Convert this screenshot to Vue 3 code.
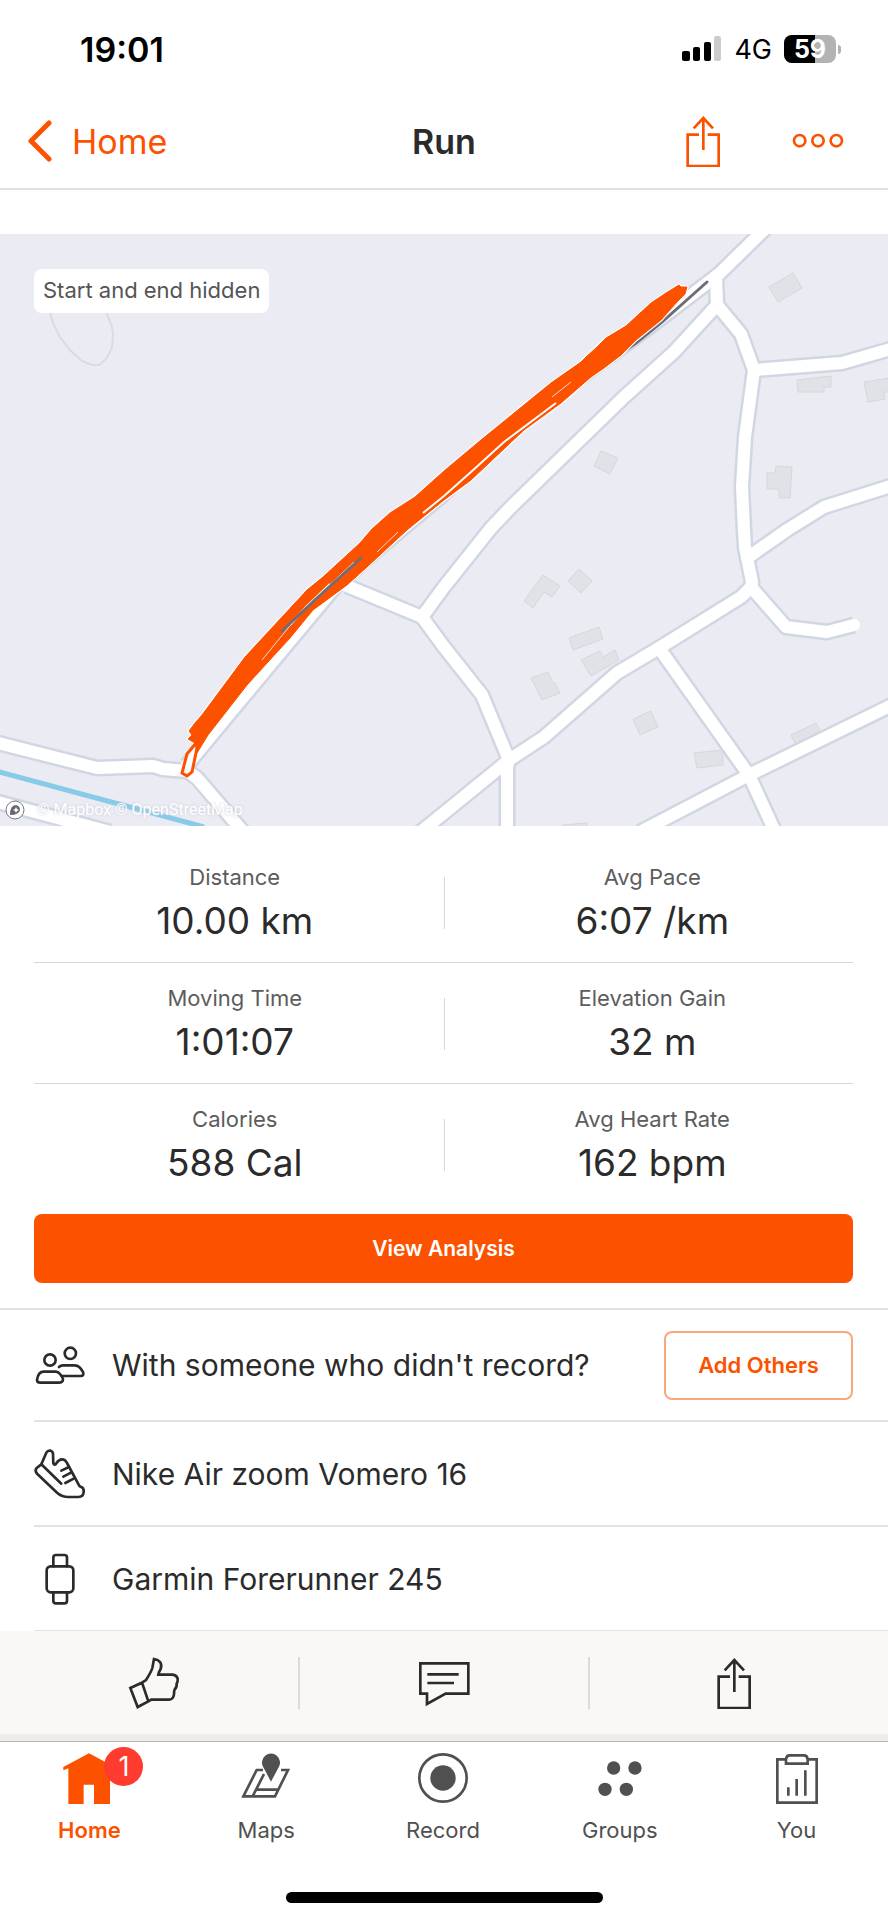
<template>
  <div class="screen">
    <!-- status bar -->
    <div class="status">
      <span class="clock">19:01</span>
      <div class="status-right">
        <svg class="signal" viewBox="0 0 40 26" aria-hidden="true">
          <rect x="0" y="15" width="8" height="10" rx="2" />
          <rect x="11" y="11" width="7" height="14" rx="2" />
          <rect x="22" y="6" width="7" height="19" rx="2" />
          <rect class="off" x="32" y="0" width="7" height="25" rx="2" />
        </svg>
        <span class="network">4G</span>
        <span class="battery">
          <span class="battery-level" :style="{ width: battery + '%' }"></span>
          <b>{{ battery }}</b>
        </span>
      </div>
    </div>

    <header class="topbar">
      <a class="back" href="#home">
        <svg viewBox="0 0 24 42" aria-hidden="true"><path d="M21 3 L3 21 L21 39" /></svg>
        Home
      </a>
      <h1>Run</h1>
      <div class="topbar-actions">
        <button type="button" aria-label="Share">
          <svg class="icon" viewBox="0 0 156 156">
            <path d="M66 59 H32 V153 H125 V59 H92 M79 8 V105 M50 40 L79 9 L108 40" />
          </svg>
        </button>
        <button type="button" aria-label="More">
          <svg class="icon" viewBox="0 0 156 156">
            <circle cx="23" cy="77" r="17" />
            <circle cx="78" cy="77" r="17" />
            <circle cx="133" cy="77" r="17" />
          </svg>
        </button>
      </div>
    </header>

    <main>
      <div class="map">
        <svg class="map-canvas" viewBox="0 0 888 592" role="img" aria-label="Run route">
          <path class="track" d="M50 78 L53 89 L60 103 L70 116 L82 127 L92 131 L99 131 L106 125 L112 114 L113 100 L112 93 L106 78" />
          <polygon v-for="b in buildings" :key="b" class="building" :points="b" />
          <path class="water" d="M-4 537 L204 593" />
          <path v-for="r in roads" :key="'c' + r" class="road-casing" :d="r" />
          <path v-for="r in roads" :key="'r' + r" class="road" :d="r" />
          <path class="rail" d="M707 48 L662 88 L636 109 L617 122" />
          <path class="route-halo" :d="route" />
          <path class="route-loop" d="M197 508 L187 520 L182 539 L187 542 L192 538 L197 514" />
          <path class="route" :d="route" />
          <path class="streak wide" d="M423 279 L444 262 L471 238 L504 208 L556 169 M290 391 L306 373 L330 350" />
          <path class="streak" d="M571 148 L552 163 M262 426 L293 388 L306 373 L354 328 M377 318 L398 298" />
          <path class="rail" d="M282 397 L317 364 L361 324" />
        </svg>
        <span class="privacy">Start and end hidden</span>
        <div class="credit">
          <svg viewBox="0 0 20 20" aria-hidden="true">
            <circle class="ring" cx="10" cy="10" r="9" />
            <path d="M5 15 Q5 5 11 5 Q15 6 15 10 Q14 15 5 15z" />
            <path class="star" d="M11 7 L12 9 L14 10 L12 11 L11 13 L10 11 L8 10 L10 9z" />
          </svg>
          <span>© Mapbox © OpenStreetMap</span>
        </div>
      </div>

      <section class="stats">
        <div v-for="(row, i) in stats" :key="i" class="stat-row">
          <dl v-for="s in row" :key="s.label" class="stat">
            <dt>{{ s.label }}</dt>
            <dd>{{ s.value }}</dd>
          </dl>
        </div>
        <button type="button" class="analysis">View Analysis</button>
      </section>

      <ul class="details">
        <li class="with-button">
          <svg class="icon" viewBox="0 0 156 156" aria-hidden="true">
            <circle cx="48" cy="63" r="17" />
            <circle cx="109" cy="43" r="17" />
            <path d="M29 98 H65 Q73 98 78 105 L84 113 Q89 120 86 126 Q83 131 75 131 H19 Q9 131 9 122 Q13 98 29 98z" />
            <path d="M75 84 Q80 79 87 79 H120 Q134 79 141 90 L147 99 Q151 111 140 111 H84" />
          </svg>
          <span>With someone who didn't record?</span>
          <button type="button" class="add">Add Others</button>
        </li>
        <li>
          <svg class="icon" viewBox="0 0 156 156" aria-hidden="true">
            <path d="M22 49 L37 14 Q42 6 50 8 Q57 10 57 18 L58 46 Q61 54 67 46 Q75 33 86 34 Q94 35 99 45 L134 110 Q136 115 142 117 Q150 120 149 132 Q148 147 133 147 H103 Q84 147 70 135 L10 78 Q1 68 8 60z" />
            <path d="M22 49 L82 107 M82 68 L105 57 M88 86 L111 74 M94 105 L119 92" />
          </svg>
          <span>Nike Air zoom Vomero 16</span>
        </li>
        <li>
          <svg class="icon" viewBox="0 0 156 156" aria-hidden="true">
            <rect x="38" y="40" width="80" height="78" rx="12" />
            <path d="M58 40 V14 Q58 6 66 6 H91 Q99 6 99 14 V40 M58 118 V143 Q58 151 66 151 H91 Q99 151 99 143 V118" />
          </svg>
          <span>Garmin Forerunner 245</span>
        </li>
      </ul>
    </main>

    <div class="social">
      <button type="button" aria-label="Give kudos">
        <svg class="icon" viewBox="0 0 156 156">
          <path d="M7 93 L42 77 L61 133 L29 150z M42 77 L54 69 Q70 44 73 33 L78 6 Q91 8 97 16 Q102 24 98 36 Q92 46 91 53 H134 Q146 54 149 65 Q150 75 146 80 Q147 92 140 97 Q138 101 138 112 Q136 128 122 128 H70 L61 133" />
        </svg>
      </button>
      <button type="button" aria-label="Comment">
        <svg class="icon" viewBox="0 0 156 156">
          <path d="M7 19 H151 V110 H83 L27 141 V110 H7z M28 52 H122 M28 78 H108" />
        </svg>
      </button>
      <button type="button" aria-label="Share">
        <svg class="icon" viewBox="0 0 156 156">
          <path d="M66 59 H32 V153 H125 V59 H92 M79 8 V105 M50 40 L79 9 L108 40" />
        </svg>
      </button>
    </div>

    <nav class="tabs">
      <a href="#home" class="active">
        <svg class="icon solid" viewBox="0 0 156 156">
          <path d="M1 45 L78 4 L155 45 V55 L141 49 V156 H93 V98 H62 V156 H16 V49 L1 55z" />
        </svg>
        <span>Home</span>
        <em class="badge">1</em>
      </a>
      <a href="#maps">
        <svg class="icon" viewBox="0 0 156 156">
          <path d="M69 54 H50 L10 133 H105 L144 54 H123 M72 66 L39 131 M50 113 H115" />
          <path class="fill" d="M93 89 L70 46 A27 27 0 1 1 116 46z" />
        </svg>
        <span>Maps</span>
      </a>
      <a href="#record">
        <svg class="icon" viewBox="0 0 156 156">
          <circle cx="78" cy="78" r="71" />
          <circle class="fill" cx="78" cy="78" r="38" />
        </svg>
        <span>Record</span>
      </a>
      <a href="#groups">
        <svg class="icon solid" viewBox="0 0 156 156">
          <circle cx="59" cy="48" r="20" />
          <circle cx="123" cy="48" r="20" />
          <circle cx="33" cy="112" r="20" />
          <circle cx="97" cy="112" r="20" />
        </svg>
        <span>Groups</span>
      </a>
      <a href="#you">
        <svg class="icon" viewBox="0 0 156 156">
          <path d="M45 22 H19 V152 H137 V22 H110 M45 35 V22 Q46 10 56 10 H99 Q109 10 110 22 V35z M52 106 V131 M77 81 V131 M103 55 V131" />
        </svg>
        <span>You</span>
      </a>
    </nav>
    <div class="home-indicator"></div>
  </div>
</template>

<script setup>
const battery = 59

const stats = [
  [{ label: 'Distance', value: '10.00 km' }, { label: 'Avg Pace', value: '6:07 /km' }],
  [{ label: 'Moving Time', value: '1:01:07' }, { label: 'Elevation Gain', value: '32 m' }],
  [{ label: 'Calories', value: '588 Cal' }, { label: 'Avg Heart Rate', value: '162 bpm' }],
]

// road centre lines, drawn twice: casing first, then the white surface
const roads = [
  'M766 -6 L719 40 L652 91 L596 132 L506 200 L439 264 L372 320 L335 353 L235 473 L187 531',
  'M-6 508 L97 534 L153 532 L163 535 L187 537 L197 544 L245 600',
  'M-6 567 L110 598',
  'M716 42 L717 71 L741 100 L754 136 L745 203 L742 253 L744 296 L745 313 L752 348 L751 354',
  'M754 136 L842 129 L894 114',
  'M894 251 L824 273 L787 296 L747 324',
  'M717 71 L674 118 L624 163 L511 273 L491 294 L444 353 L422 383',
  'M347 352 L422 383 L444 413 L482 461 L509 526 L507 533 L507 600',
  'M418 600 L444 579 L509 526 L544 503 L617 439 L659 414 L741 363 L751 353 L786 393 L827 398 L854 391',
  'M659 414 L749 541 L777 602',
  'M894 470 L749 541 L640 598',
]

const buildings = [
  '524,367 543,341 560,352 552,363 544,358 533,374',
  '568,347 579,335 592,347 581,359',
  '569,404 599,393 603,405 573,416',
  '581,426 600,417 603,423 615,416 619,426 591,442',
  '531,444 548,438 553,449 555,449 560,459 542,466',
  '633,485 651,477 658,493 640,501',
  '694,519 723,516 723,531 697,534',
  '791,501 816,489 821,499 796,511',
  '562,591 587,589 588,596 562,596',
  '769,53 793,39 802,54 778,68',
  '797,146 831,142 831,153 824,153 824,158 798,158',
  '864,148 890,144 890,158 884,158 885,165 868,168',
  '601,217 618,224 610,240 594,232',
  '776,232 792,233 790,264 779,264 779,255 767,255 767,239 775,239',
]

// outline of all laps together
const route =
  'M189 497 L195 489 L202 481 L245 423 L307 356 L323 343 L360 309 L372 295 L390 279 L415 263 L444 237 ' +
  'L481 206 L551 149 L581 128 L586 123 L597 113 L606 104 L626 92 L651 69 L666 59 L679 51 L681 53 L687 53 ' +
  'L685 60 L677 68 L661 86 L636 106 L621 121 L604 134 L591 143 L561 169 L524 196 L471 246 L444 266 ' +
  'L407 296 L367 333 L347 351 L313 376 L290 404 L247 451 L208 501 L197 519 L195 509 L188 505 L192 501z'
</script>

<style>
body { margin: 0; background: #fff; }
</style>

<style scoped>
.screen { font-family: Inter, "Liberation Sans", sans-serif; color: #2b2b2b; background: #fff; }
button { font: inherit; color: inherit; background: none; border: 0; padding: 0; margin: 0; cursor: pointer; }
a { color: inherit; text-decoration: none; }
.icon { display: block; width: 52px; height: 52px; flex-shrink: 0; fill: none; stroke: currentColor; stroke-width: 8; }
.icon.solid, .icon .fill { fill: currentColor; stroke: none; }

.status { box-sizing: border-box; height: 94px; padding: 4px 46px 0 80px; display: flex; align-items: center; justify-content: space-between; color: #000; }
.clock { font-size: 34px; font-weight: 600; }
.status-right { display: flex; align-items: center; gap: 12px; }
.signal { width: 40px; height: 26px; }
.signal .off { fill: #ccc; }
.network { font-size: 27px; }
.battery { position: relative; display: flex; align-items: center; justify-content: center; width: 52px; height: 28px; margin-right: 6px; border-radius: 8px; background: #b3b3b3; }
.battery-level { position: absolute; left: 0; top: 0; bottom: 0; background: #000; border-radius: 8px 0 0 8px; }
.battery b { position: relative; font-size: 25px; line-height: 28px; font-weight: 700; color: #fff; }
.battery::after { content: ''; position: absolute; left: 54px; top: 10px; width: 3px; height: 9px; border-radius: 0 3px 3px 0; background: #b3b3b3; }

.topbar { display: grid; grid-template-columns: 1fr auto 1fr; align-items: center; height: 94px; padding: 0 28px; border-bottom: 2px solid #e0e0e0; }
.back { display: flex; align-items: center; gap: 20px; font-size: 34px; color: #fc5200; }
.back svg { width: 24px; height: 42px; fill: none; stroke: #fc5200; stroke-width: 5; stroke-linecap: round; stroke-linejoin: round; }
.topbar h1 { margin: 0; font-size: 34px; font-weight: 600; }
.topbar-actions { display: flex; justify-content: flex-end; gap: 63px; padding-right: 16px; color: #fc5200; }

.map { position: relative; margin-top: 44px; }
.map-canvas { display: block; width: 100%; background: #ebebf4; }
.track { fill: none; stroke: #dadce0; stroke-width: 2; }
.building { fill: #e1e2e8; stroke: #d8d6d8; stroke-width: 1; }
.water { stroke: #87cbe9; stroke-width: 5; }
.road-casing { fill: none; stroke: #d1d7e2; stroke-width: 17; stroke-linejoin: round; }
.road { fill: none; stroke: #fff; stroke-width: 12; stroke-linejoin: round; stroke-linecap: round; }
.route { fill: #fc5200; stroke: #fc5200; stroke-width: 1; stroke-linejoin: round; }
.route-halo { fill: #fff; stroke: #fff; stroke-width: 3; stroke-linejoin: round; }
.route-loop { fill: #fff; stroke: #fc5200; stroke-width: 3; }
.streak { fill: none; stroke: #ffd9c8; stroke-width: 1; }
.streak.wide { stroke: #fff; stroke-width: 2; }
.rail { fill: none; stroke: #706d78; stroke-width: 3; stroke-linecap: round; }
.privacy { position: absolute; left: 34px; top: 35px; padding: 0 9px 1px; line-height: 43px; border-radius: 8px; background: #fff; color: #555; font-size: 22px; }
.credit { position: absolute; left: 5px; bottom: 5px; display: flex; align-items: center; gap: 12px; font-family: Roboto, sans-serif; font-size: 16px; line-height: 22px; color: #fff; text-shadow: 0 0 3px #c8cad4; }
.credit svg { width: 20px; height: 20px; fill: #666672; }
.credit .ring { fill: #fff; stroke: #777783; stroke-width: 1; }
.credit .star { fill: #fff; }

.stats { padding: 16px 35px 25px 34px; }
.stat-row { position: relative; display: grid; grid-template-columns: 1fr 1fr; gap: 16px; border-bottom: 1px solid #d5d5de; }
.stat-row:nth-child(3) { border-bottom: 0; }
.stat-row::after { content: ''; position: absolute; left: 50%; top: 35px; width: 1px; height: 52px; background: #d5d5de; }
.stat { margin: 0; padding: 21px 0 18px; text-align: center; }
.stat dt { font-size: 22px; line-height: 28px; color: #5c5c5c; }
.stat dd { margin: 7px 0 0; font-size: 37px; line-height: 46px; }
.analysis { display: block; width: 100%; height: 69px; margin-top: 10px; border-radius: 8px; background: #fc5200; color: #fff; font-size: 21px; font-weight: 600; }

.details { list-style: none; margin: 0; padding: 0 0 0 34px; border-top: 2px solid #e3e3e3; }
.details li { box-sizing: border-box; display: flex; align-items: center; height: 105px; padding-right: 35px; gap: 26px; border-bottom: 2px solid #e3e3e3; font-size: 30px; }
.details li.with-button { height: 112px; }
.details li:last-child { height: 104px; border-bottom-width: 1px; }
.details .icon { stroke-linecap: round; stroke-linejoin: round; }
.add { width: 189px; height: 69px; margin-left: auto; border: 2px solid #fca57c; border-radius: 8px; color: #fc5200; font-size: 22px; font-weight: 600; }

.social { display: grid; grid-template-columns: repeat(3, 1fr); padding: 0 9px; background: #f9f8f4; border-bottom: 7px solid #edece8; }
.social button { display: flex; align-items: center; justify-content: center; height: 103px; position: relative; }
.social button + button::before { content: ''; position: absolute; left: -1px; top: 26px; width: 2px; height: 52px; background: #dcdbd8; }

.tabs { display: grid; grid-template-columns: repeat(5, 1fr); padding: 10px 3px 0 1px; border-top: 1px solid #b9b9b7; color: #505050; }
.tabs a { position: relative; display: flex; flex-direction: column; align-items: center; gap: 12px; font-size: 22px; line-height: 28px; }
.tabs a.active { color: #fc5200; font-weight: 600; }
.badge { position: absolute; left: 50%; top: -5px; width: 39px; margin-left: 15px; border-radius: 50%; background: #ff3b30; color: #fff; font-size: 27px; line-height: 39px; font-style: normal; font-weight: 400; text-align: center; }
.home-indicator { width: 317px; height: 11px; margin: 48px auto 17px; border-radius: 6px; background: #000; }
</style>
